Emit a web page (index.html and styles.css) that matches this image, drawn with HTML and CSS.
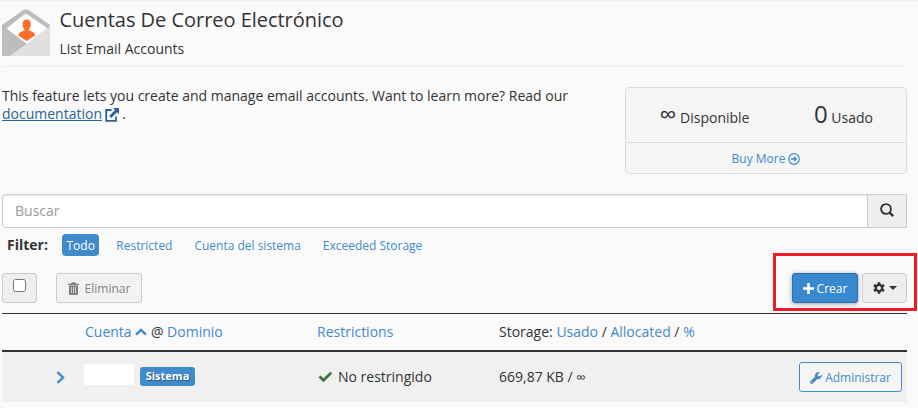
FILE: index.html
```html
<!DOCTYPE html>
<html lang="es">
<head>
<meta charset="utf-8">
<title>Cuentas De Correo Electrónico</title>
<link rel="stylesheet" href="styles.css">
</head>
<body>
<main class="page">
  <header class="page-header">
    <svg class="page-icon" width="48" height="48" viewBox="0 0 48 48">
      <path d="M0 16 21 1.2Q24-.8 27 1.2L48 16V20H0Z" fill="#bdbdbd"/>
      <path d="M4.500 19.500 21 6.500Q24 4 27 6.500L45 19 25 35Z" fill="#fff"/>
      <path d="M48 17V45.500Q48 47 46.500 47H8Z" fill="#e0e0e0"/>
      <path d="M0 16 24.500 34.800 8 47H1.500Q0 47 0 45.500Z" fill="#bdbdbd"/>
      <path d="M24.700 10.500C27.500 10.500 29 12.500 28.800 15.500C28.700 18 28 19 27.200 20V21.500C29.500 22.500 32.800 23 33.200 26.500L24.700 32 16.300 26.500C16.700 23 20 22.500 22.300 21.500V20C21.500 19 20.700 18 20.600 15.500C20.500 12.500 22 10.500 24.700 10.500Z" fill="#ff6c2c"/>
    </svg>
    <div class="titles">
      <h1>Cuentas De Correo Electrónico</h1>
      <h2>List Email Accounts</h2>
    </div>
  </header>

  <section class="intro">
    <p class="description">This feature lets you create and manage email accounts. Want to learn more? Read our <a href="#"><span class="doc">documentation</span> <svg class="external" width="14" height="14" viewBox="0 0 14 14"><path d="M6.500 2H1.200V12.800H11V8.500" fill="none" stroke="currentColor" stroke-width="1.800"/><path d="M8 0H14V6L12 4.200 6.200 10 4.200 8 10 2.100Z" fill="currentColor"/></svg></a> .</p>
    <div class="stats">
      <div class="stats-row">
        <div><span class="figure">∞</span> Disponible</div>
        <div><span class="figure">0</span> Usado</div>
      </div>
      <a class="buy" href="#">Buy More <svg width="12" height="12" viewBox="0 0 12 12"><circle cx="6" cy="6" r="5.300" fill="none" stroke="currentColor" stroke-width="1.200"/><path d="M3 6H7.500M6 3.700 8.300 6 6 8.300" fill="none" stroke="currentColor" stroke-width="1.300"/></svg></a>
    </div>
  </section>

  <div class="search">
    <input type="text" placeholder="Buscar">
    <button class="search-btn" aria-label="Buscar"><svg width="14" height="14" viewBox="0 0 14 14"><circle cx="6" cy="6" r="4.900" fill="none" stroke="currentColor" stroke-width="1.900"/><path d="M9.400 9.400 13.200 13.200" stroke="currentColor" stroke-width="2.300"/></svg></button>
  </div>

  <nav class="filters">
    <strong>Filter:</strong>
    <a class="pill active" href="#">Todo</a>
    <a class="pill" href="#">Restricted</a>
    <a class="pill" href="#">Cuenta del sistema</a>
    <a class="pill" href="#">Exceeded Storage</a>
  </nav>

  <div class="toolbar">
    <label class="btn select-all"><input type="checkbox"></label>
    <button class="btn delete"><svg width="11" height="13" viewBox="0 0 11 13"><path d="M0 3V1.700H3L3.600.3H7.400L8 1.700H11V3Z" fill="currentColor"/><path d="M1 3.500H10V11.500Q10 13 8.500 13H2.500Q1 13 1 11.500Z" fill="currentColor"/><path d="M3.500 5V11M5.500 5V11M7.500 5V11" stroke="#f2f2f2" stroke-width=".7"/></svg>Eliminar</button>
    <div class="actions">
      <button class="btn create"><svg width="11" height="11" viewBox="0 0 11 11"><path d="M5.500 0V11M0 5.500H11" stroke="currentColor" stroke-width="2.600"/></svg>Crear</button>
      <button class="btn settings" aria-label="Opciones"><svg width="12" height="12" viewBox="0 0 12 12"><path d="M6 .3V11.700M.9 3.200 11.100 8.800M.9 8.800 11.100 3.200" stroke="currentColor" stroke-width="2.600"/><circle cx="6" cy="6" r="3.200" fill="none" stroke="currentColor" stroke-width="2.400"/><circle cx="6" cy="6" r="2" fill="#eee"/></svg><span class="caret"></span></button>
      <div class="highlight"></div>
    </div>
  </div>

  <section class="accounts">
    <div class="row head">
      <div></div>
      <div><a href="#">Cuenta <svg class="sort" width="12" height="8" viewBox="0 0 12 8"><path d="M1 6.700 6 1.900 11 6.700" fill="none" stroke="currentColor" stroke-width="2.400"/></svg></a> @ <a href="#">Dominio</a></div>
      <div><a href="#">Restrictions</a></div>
      <div>Storage: <a href="#">Usado</a> / <a href="#">Allocated</a> / <a href="#">%</a></div>
      <div></div>
    </div>
    <div class="row body">
      <div class="expand"><svg width="9" height="13" viewBox="0 0 8 12"><path d="M1.200 1 6.300 6 1.200 11" fill="none" stroke="currentColor" stroke-width="2.200"/></svg></div>
      <div class="account"><span class="blank"></span><span class="badge">Sistema</span></div>
      <div class="status"><svg width="15" height="12" viewBox="0 0 15 12"><path d="M1.500 5.500 5.500 9.300 13.300 1.600" fill="none" stroke="#3c763d" stroke-width="2.700"/></svg>No restringido</div>
      <div>669,87 KB / <span class="infinity">∞</span></div>
      <div class="manage-cell"><button class="btn manage"><svg width="12" height="12" viewBox="0 0 12 12"><path d="M9.900.4A3.700 3.700 0 0 0 5 4.800L.5 9.300A1.550 1.550 0 0 0 2.700 11.500L7.200 7A3.700 3.700 0 0 0 11.800 2.500L9.700 4.400 7.900 4 7.600 2.400Z" fill="currentColor"/><circle cx="1.700" cy="10.300" r=".5" fill="#f5f5f5"/></svg>Administrar</button></div>
    </div>
  </section>
</main>
</body>
</html>
```

FILE: styles.css
```css
* { box-sizing: border-box; }
body {
  margin: 0;
  height: 408px;
  overflow: hidden;
  background: #fafafa;
  color: #333;
  font: 14px/18px "Open Sans", "Noto Sans", sans-serif;
}
a { color: #428bca; text-decoration: none; }
button, input { font-family: inherit; }
.page { width: 918px; padding: 0 11px 0 2px; border-top: 1px solid #f0f0f0; }
.page-header { display: flex; gap: 9.500px; height: 66px; border-bottom: 1px solid #eee; }
.page-icon { margin-top: 8px; }
h1, h2 { margin: 0; font-weight: 400; }
h1 { margin-top: 5px; font-size: 20px; line-height: 28px; letter-spacing: -.03px; }
h2 { margin-top: 5px; font-size: 14px; line-height: 20px; letter-spacing: -.01px; }
.intro { display: flex; justify-content: space-between; padding-top: 20px; }
.description { width: 590px; margin: 0; }
.description a { color: #2a6496; }
.doc { text-decoration: underline; }
.external { vertical-align: -3px; margin-left: -1px; }
.stats { width: 282px; height: 87px; border: 1px solid #ddd; border-radius: 4px; background: #f5f5f5; }
.stats-row { display: flex; height: 54px; justify-content: space-between; padding: 9px 33px 0 33.500px; line-height: 34px; }
.figure { font-size: 24px; }
.buy { display: flex; align-items: center; justify-content: center; gap: 3px; height: 32px; padding-top: 1px; border-top: 1px solid #ddd; font-size: 12px; }
.search { display: flex; height: 34px; margin-top: 20px; }
.search input { flex: 1; border: 1px solid #ccc; border-radius: 4px 0 0 4px; padding: 0 12px 1px; background: #fff; font-size: 14px; box-shadow: inset 0 1px 1px rgba(0,0,0,.075); }
.search input::placeholder { color: #999; opacity: 1; }
.search-btn { display: flex; align-items: center; justify-content: center; width: 40px; margin-left: -1px; padding: 0 0 3px; border: 1px solid #ccc; background: #eee; color: #333; }
.filters { display: flex; height: 22px; margin-top: 6px; padding-left: 5px; line-height: 23px; }
.filters strong { width: 55px; line-height: 22px; }
.pill { padding: 0 4.500px; margin-right: 13px; border-radius: 4px; font-size: 12px; letter-spacing: -.01px; }
.pill.active { margin-right: 12.500px; background: #428bca; color: #fff; }
.toolbar { display: flex; height: 30px; margin-top: 17px; }
.btn { display: flex; align-items: center; justify-content: center; height: 30px; padding: 0; border: 1px solid #ccc; border-radius: 3px; background: #eee; color: #333; font-size: 12px; line-height: 18px; }
.select-all { width: 35px; padding-bottom: 5px; }
.select-all input { margin: 0; width: 13px; height: 13px; }
.delete { width: 86px; margin-left: 19px; padding-top: 1px; gap: 6px; background: #f2f2f2; color: #808080; }
.actions { position: relative; display: flex; gap: 4px; margin-left: auto; }
.create { width: 66px; padding-top: 1px; gap: 3px; border-color: #2a6db0; background: #3889d0; color: #fff; box-shadow: 0 1px 5px rgba(0,0,0,.35); }
.settings { width: 45px; gap: 4px; }
.caret { border: 4px solid transparent; border-top-color: #333; border-bottom: 0; }
.highlight { position: absolute; left: -19px; top: -20px; width: 144px; height: 58px; border: 3px solid #ed1c24; }
.accounts { margin-top: 10px; border-top: 1px solid #333; }
.row { display: grid; grid-template-columns: 83px 232px 182px 1fr 108px; align-items: center; }
.sort { vertical-align: 1px; }
.head { height: 38px; border-bottom: 2px solid #333; }
.body { height: 50px; background: #f0f0f0; }
.expand { display: flex; padding-left: 54px; color: #428bca; }
.account { display: flex; align-items: center; gap: 6px; margin-left: -1px; }
.blank { width: 50px; height: 21px; margin-bottom: 5px; background: #fff; }
.badge { width: 55px; height: 19px; margin-bottom: 1px; border-radius: 3px; background: #428bca; color: #fff; font-size: 11px; font-weight: 700; line-height: 18px; text-align: center; text-shadow: 1px 1px 1px rgba(0,0,0,.4); }
.status { display: flex; align-items: center; gap: 5px; padding-left: 1px; }
.infinity { font-size: 13px; }
.manage { width: 103px; padding-top: 1px; gap: 3px; border-color: #428bca; background: #f5f5f5; color: #428bca; letter-spacing: -.03px; }
```
